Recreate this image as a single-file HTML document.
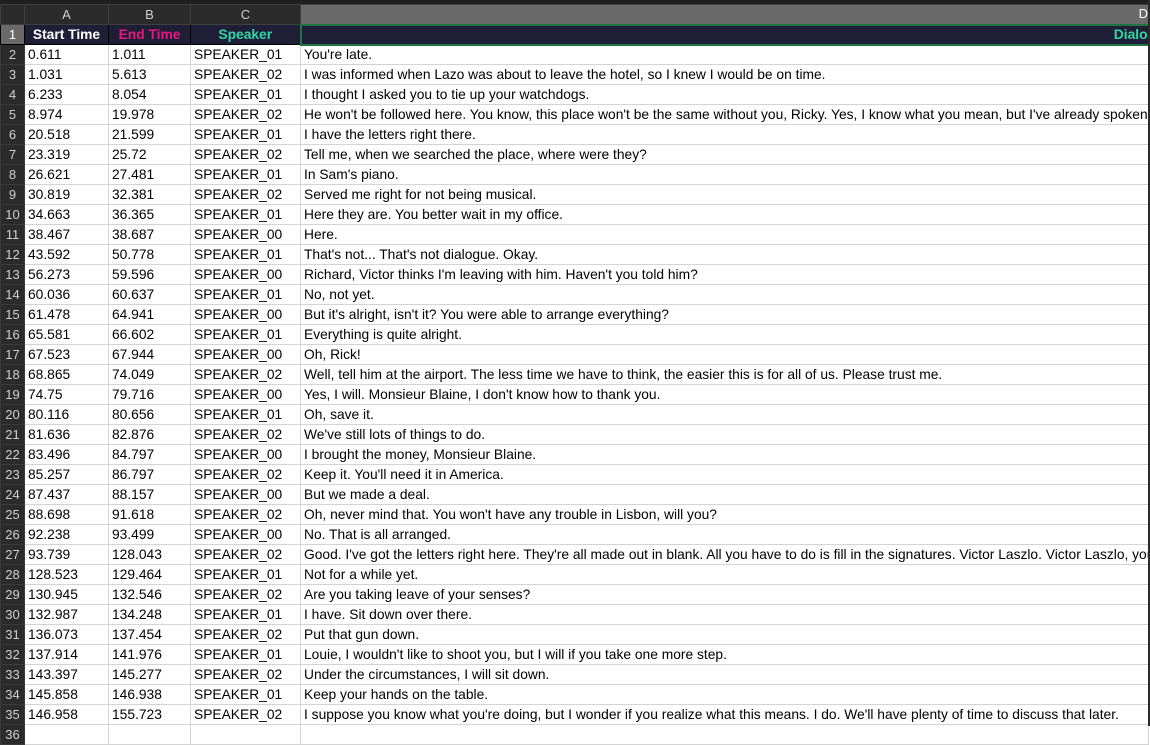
<!DOCTYPE html>
<html><head><meta charset="utf-8"><style>
*{margin:0;padding:0;box-sizing:border-box}
body{width:1150px;height:726px;overflow:hidden;background:#fff;font-family:"Liberation Sans",Arial,sans-serif;position:relative}
.top{position:absolute;left:0;top:0;width:1150px;height:5px;background:#1f1f1f}
table{position:absolute;left:0;top:4px;border-collapse:collapse;table-layout:fixed;width:1148px}
td{height:20px;border:1px solid #d4d4d4;font-size:13.8px;color:#000;padding:0 0 0 3px;white-space:nowrap;overflow:hidden;line-height:18px}
td.rh{background:#2b2b2b;color:#d0d0d0;border-color:#3a3a3a;padding:0;text-align:center;font-size:13px}
tr.ch td{background:#2b2b2b;color:#d0d0d0;border-color:#3f3f3f;text-align:center;padding:0;height:20px;font-size:13px}
tr.ch td.sel{background:#6a6a6a;color:#fff;text-align:right;border-bottom:2px solid #217346}
tr.h1 td{background:#1e1f36;font-weight:bold;text-align:center;padding:0;border-color:#000;height:20px}
tr.h1 td.rh{background:#6a6a6a;color:#fff;font-weight:normal}
.r{position:absolute;right:0;top:0;width:2px;height:726px;background:#2b2b2b}
</style></head><body>
<div class="top"></div>
<table>
<colgroup><col style="width:24px"><col style="width:84px"><col style="width:82px"><col style="width:110px"><col style="width:848px"></colgroup>
<tr class="ch"><td class="rh" style="background:#2b2b2b"></td><td>A</td><td>B</td><td>C</td><td class="sel">D</td></tr>
<tr class="h1"><td class="rh">1</td><td style="color:#fff">Start Time</td><td style="color:#e8177e">End Time</td><td style="color:#2ed8a8">Speaker</td><td style="color:#2ed8a8;text-align:right;border:2px solid #217346">Dialo</td></tr>
<tr><td class="rh">2</td><td>0.611</td><td>1.011</td><td>SPEAKER_01</td><td>You're late.</td></tr>
<tr><td class="rh">3</td><td>1.031</td><td>5.613</td><td>SPEAKER_02</td><td>I was informed when Lazo was about to leave the hotel, so I knew I would be on time.</td></tr>
<tr><td class="rh">4</td><td>6.233</td><td>8.054</td><td>SPEAKER_01</td><td>I thought I asked you to tie up your watchdogs.</td></tr>
<tr><td class="rh">5</td><td>8.974</td><td>19.978</td><td>SPEAKER_02</td><td>He won't be followed here. You know, this place won't be the same without you, Ricky. Yes, I know what you mean, but I've already spoken</td></tr>
<tr><td class="rh">6</td><td>20.518</td><td>21.599</td><td>SPEAKER_01</td><td>I have the letters right there.</td></tr>
<tr><td class="rh">7</td><td>23.319</td><td>25.72</td><td>SPEAKER_02</td><td>Tell me, when we searched the place, where were they?</td></tr>
<tr><td class="rh">8</td><td>26.621</td><td>27.481</td><td>SPEAKER_01</td><td>In Sam's piano.</td></tr>
<tr><td class="rh">9</td><td>30.819</td><td>32.381</td><td>SPEAKER_02</td><td>Served me right for not being musical.</td></tr>
<tr><td class="rh">10</td><td>34.663</td><td>36.365</td><td>SPEAKER_01</td><td>Here they are. You better wait in my office.</td></tr>
<tr><td class="rh">11</td><td>38.467</td><td>38.687</td><td>SPEAKER_00</td><td>Here.</td></tr>
<tr><td class="rh">12</td><td>43.592</td><td>50.778</td><td>SPEAKER_01</td><td>That's not... That's not dialogue. Okay.</td></tr>
<tr><td class="rh">13</td><td>56.273</td><td>59.596</td><td>SPEAKER_00</td><td>Richard, Victor thinks I'm leaving with him. Haven't you told him?</td></tr>
<tr><td class="rh">14</td><td>60.036</td><td>60.637</td><td>SPEAKER_01</td><td>No, not yet.</td></tr>
<tr><td class="rh">15</td><td>61.478</td><td>64.941</td><td>SPEAKER_00</td><td>But it's alright, isn't it? You were able to arrange everything?</td></tr>
<tr><td class="rh">16</td><td>65.581</td><td>66.602</td><td>SPEAKER_01</td><td>Everything is quite alright.</td></tr>
<tr><td class="rh">17</td><td>67.523</td><td>67.944</td><td>SPEAKER_00</td><td>Oh, Rick!</td></tr>
<tr><td class="rh">18</td><td>68.865</td><td>74.049</td><td>SPEAKER_02</td><td>Well, tell him at the airport. The less time we have to think, the easier this is for all of us. Please trust me.</td></tr>
<tr><td class="rh">19</td><td>74.75</td><td>79.716</td><td>SPEAKER_00</td><td>Yes, I will. Monsieur Blaine, I don't know how to thank you.</td></tr>
<tr><td class="rh">20</td><td>80.116</td><td>80.656</td><td>SPEAKER_01</td><td>Oh, save it.</td></tr>
<tr><td class="rh">21</td><td>81.636</td><td>82.876</td><td>SPEAKER_02</td><td>We've still lots of things to do.</td></tr>
<tr><td class="rh">22</td><td>83.496</td><td>84.797</td><td>SPEAKER_00</td><td>I brought the money, Monsieur Blaine.</td></tr>
<tr><td class="rh">23</td><td>85.257</td><td>86.797</td><td>SPEAKER_02</td><td>Keep it. You'll need it in America.</td></tr>
<tr><td class="rh">24</td><td>87.437</td><td>88.157</td><td>SPEAKER_00</td><td>But we made a deal.</td></tr>
<tr><td class="rh">25</td><td>88.698</td><td>91.618</td><td>SPEAKER_02</td><td>Oh, never mind that. You won't have any trouble in Lisbon, will you?</td></tr>
<tr><td class="rh">26</td><td>92.238</td><td>93.499</td><td>SPEAKER_00</td><td>No. That is all arranged.</td></tr>
<tr><td class="rh">27</td><td>93.739</td><td>128.043</td><td>SPEAKER_02</td><td>Good. I've got the letters right here. They're all made out in blank. All you have to do is fill in the signatures. Victor Laszlo. Victor Laszlo, you</td></tr>
<tr><td class="rh">28</td><td>128.523</td><td>129.464</td><td>SPEAKER_01</td><td>Not for a while yet.</td></tr>
<tr><td class="rh">29</td><td>130.945</td><td>132.546</td><td>SPEAKER_02</td><td>Are you taking leave of your senses?</td></tr>
<tr><td class="rh">30</td><td>132.987</td><td>134.248</td><td>SPEAKER_01</td><td>I have. Sit down over there.</td></tr>
<tr><td class="rh">31</td><td>136.073</td><td>137.454</td><td>SPEAKER_02</td><td>Put that gun down.</td></tr>
<tr><td class="rh">32</td><td>137.914</td><td>141.976</td><td>SPEAKER_01</td><td>Louie, I wouldn't like to shoot you, but I will if you take one more step.</td></tr>
<tr><td class="rh">33</td><td>143.397</td><td>145.277</td><td>SPEAKER_02</td><td>Under the circumstances, I will sit down.</td></tr>
<tr><td class="rh">34</td><td>145.858</td><td>146.938</td><td>SPEAKER_01</td><td>Keep your hands on the table.</td></tr>
<tr><td class="rh">35</td><td>146.958</td><td>155.723</td><td>SPEAKER_02</td><td>I suppose you know what you're doing, but I wonder if you realize what this means. I do. We'll have plenty of time to discuss that later.</td></tr>
<tr><td class="rh">36</td><td></td><td></td><td></td><td></td></tr>
</table>
<div class="r"></div>
</body></html>
